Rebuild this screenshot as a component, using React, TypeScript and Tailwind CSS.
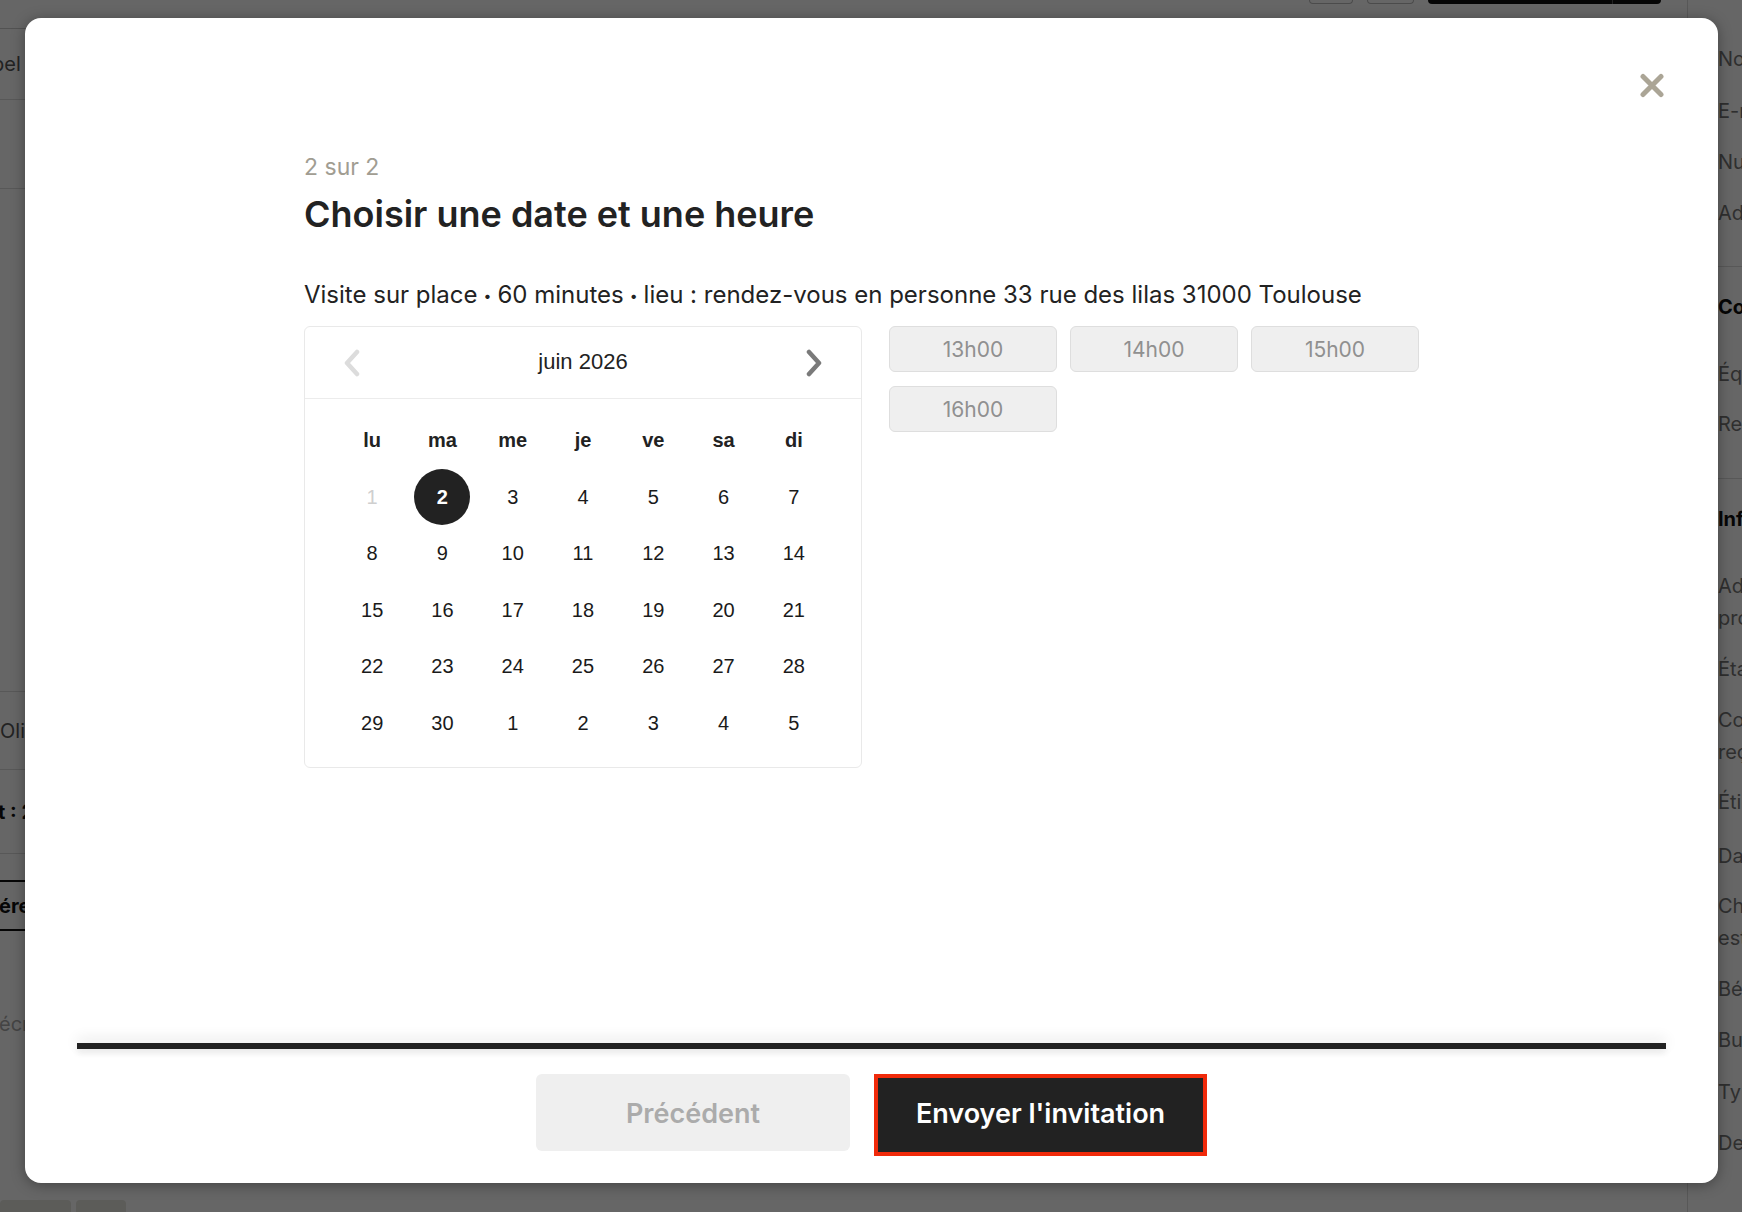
import React from "react";

const weekdays = ["lu", "ma", "me", "je", "ve", "sa", "di"];

const weeks: { day: number; muted?: boolean; selected?: boolean }[][] = [
  [{ day: 1, muted: true }, { day: 2, selected: true }, { day: 3 }, { day: 4 }, { day: 5 }, { day: 6 }, { day: 7 }],
  [8, 9, 10, 11, 12, 13, 14].map((day) => ({ day })),
  [15, 16, 17, 18, 19, 20, 21].map((day) => ({ day })),
  [22, 23, 24, 25, 26, 27, 28].map((day) => ({ day })),
  [29, 30, 1, 2, 3, 4, 5].map((day) => ({ day })),
];

const slots = ["13h00", "14h00", "15h00", "16h00"];

// side panel of the record page behind the dialog
const rightLabels: { text: string; second?: string; bold?: boolean; mt: string; ruleBefore?: string }[] = [
  { text: "Nom", mt: "mt-0" },
  { text: "E-mail", mt: "mt-[20px]" },
  { text: "Numéro", mt: "mt-[19px]" },
  { text: "Adresse", mt: "mt-[19px]" },
  { text: "Coordonnées", bold: true, mt: "mt-[24px]", ruleBefore: "mt-[37px]" },
  { text: "Équipe", mt: "mt-[35px]" },
  { text: "Responsable", mt: "mt-[18px]" },
  { text: "Informations", bold: true, mt: "mt-[24px]", ruleBefore: "mt-[38px]" },
  { text: "Adresse du", second: "projet", mt: "mt-[35px]" },
  { text: "État", mt: "mt-[19px]" },
  { text: "Contact", second: "reçu", mt: "mt-[19px]" },
  { text: "Étiquettes", mt: "mt-[18px]" },
  { text: "Date", mt: "mt-[22px]" },
  { text: "Chantier", second: "estimé", mt: "mt-[18px]" },
  { text: "Bénéficiaire", mt: "mt-[19px]" },
  { text: "Budget", mt: "mt-[19px]" },
  { text: "Type", mt: "mt-[20px]" },
  { text: "Description", mt: "mt-[19px]" },
];

function Chevron({ dir, className }: { dir: "left" | "right"; className: string }) {
  return (
    <svg width="18" height="28" viewBox="0 0 18 28" className={className}>
      <polyline
        points={dir === "left" ? "14,3 4,14 14,25" : "4,3 14,14 4,25"}
        fill="none"
        stroke="currentColor"
        strokeWidth="4.5"
        strokeLinecap="round"
        strokeLinejoin="round"
      />
    </svg>
  );
}

function Calendar() {
  return (
    <div className="w-[558px] rounded-[6px] border border-[#e9e9e9] bg-white font-['Liberation_Sans',Arial,sans-serif]">
      <div className="flex h-[72px] items-center justify-between border-b border-[#ececec] px-[38px]">
        <Chevron dir="left" className="text-[#dcdcdc]" />
        <span className="-mt-[3px] text-[22px] text-[#222]">juin 2026</span>
        <Chevron dir="right" className="text-[#7a7a7a]" />
      </div>
      <div className="px-[32px] pb-[16px] pt-[13px]">
        <div className="grid h-[56.5px] grid-cols-7 items-center text-center text-[20px] font-bold text-[#222]">
          {weekdays.map((d) => (
            <span key={d}>{d}</span>
          ))}
        </div>
        {weeks.map((week, i) => (
          <div key={i} className="grid h-[56.5px] grid-cols-7 items-center text-center text-[20px]">
            {week.map((c, j) => (
              <div key={j} className="flex items-center justify-center">
                {c.selected ? (
                  <span className="flex h-[56px] w-[56px] items-center justify-center rounded-full bg-[#222] font-bold text-white">
                    {c.day}
                  </span>
                ) : (
                  <span className={c.muted ? "text-[#cfcfcf]" : "text-[#1a1a1a]"}>{c.day}</span>
                )}
              </div>
            ))}
          </div>
        ))}
      </div>
    </div>
  );
}

function BackgroundPage() {
  return (
    <div className="flex h-full w-full bg-white font-['Inter',sans-serif] text-[20px]">
      {/* left record column */}
      <div className="flex w-[420px] shrink-0 flex-col text-[#555]">
        <div className="h-[29px] shrink-0 border-b border-[#ccc]" />
        <div className="flex h-[71px] shrink-0 items-center border-b border-[#ddd]">
          <span className="-ml-[34px]">Appel</span>
        </div>
        <div className="h-[89px] shrink-0 border-b border-[#ddd]" />
        <div className="h-[503px] shrink-0 border-b border-[#ddd]" />
        <div className="flex h-[78px] shrink-0 items-center border-b border-[#ddd]">Olivier Martin</div>
        <div className="flex h-[84px] shrink-0 items-center border-b border-[#ddd] font-bold text-[#111]">
          <span className="-ml-[2px]">t : 2</span>
        </div>
        <div className="h-[26px] shrink-0" />
        <div className="flex h-[51px] shrink-0 items-center border-y-2 border-[#111] font-bold text-[#111]">
          <span className="-ml-[1px]">érer</span>
        </div>
        <div className="flex h-[186px] shrink-0 items-center text-[#aaa]">
          <span className="-ml-[1px]">écrire</span>
        </div>
        <div className="mt-[83px] flex shrink-0 gap-[5px]">
          <div className="h-[12px] w-[71px] rounded-t-[4px] bg-[#e6e6de]" />
          <div className="h-[12px] w-[50px] rounded-t-[4px] bg-[#e6e6de]" />
        </div>
      </div>

      <div className="flex flex-1 justify-end">
        <div className="flex h-[4px] gap-[14px] pr-[26px]">
          <div className="h-[4px] w-[44px] rounded-b-[6px] border border-t-0 border-[#bbb]" />
          <div className="h-[4px] w-[47px] rounded-b-[6px] border border-t-0 border-[#bbb]" />
          <div className="flex h-[4px] w-[233px] rounded-b-[6px] bg-[#111]">
            <div className="w-[185px] border-r border-[#555]" />
          </div>
        </div>
      </div>

      {/* right detail panel */}
      <div className="flex w-[55px] shrink-0 flex-col border-l border-[#ddd] pl-[30px] pt-[43px] leading-[32px] text-[#777]">
        {rightLabels.map((l) => (
          <React.Fragment key={l.text}>
            {l.ruleBefore && <div className={`${l.ruleBefore} -ml-[30px] h-px w-[85px] shrink-0 bg-[#ddd]`} />}
            <div className={`${l.mt} shrink-0 whitespace-nowrap ${l.bold ? "font-bold text-[#111]" : ""}`}>
              <div>{l.text}</div>
              {l.second && <div>{l.second}</div>}
            </div>
          </React.Fragment>
        ))}
      </div>
    </div>
  );
}

function Dot() {
  return <span className="mx-[6px] inline-block align-middle text-[14px] leading-none">•</span>;
}

export default function App() {
  return (
    <div className="relative h-[1212px] w-[1742px] overflow-hidden">
      <BackgroundPage />

      <div className="absolute inset-0 bg-[rgba(0,0,0,0.6)] pl-[25px] pt-[18px]">
        <div className="relative flex h-[1165px] w-[1693px] flex-col rounded-[16px] bg-white font-['Inter',sans-serif] shadow-[0_2px_14px_rgba(0,0,0,0.35)]">
          <button className="absolute right-[54px] top-[55px] text-[#aba596]" aria-label="Fermer">
            <svg width="24" height="25" viewBox="0 0 24 25">
              <path d="M3 3.5 L21 21.5 M21 3.5 L3 21.5" stroke="currentColor" strokeWidth="5" strokeLinecap="round" />
            </svg>
          </button>

          <div className="flex-1 px-[279px] pt-[134px]">
            <div className="text-[23px] leading-[30px] text-[#a19d92]">2 sur 2</div>
            <h1 className="mt-[11px] text-[36px] font-semibold leading-[42px] text-[#222]">
              Choisir une date et une heure
            </h1>
            <p className="mt-[44px] text-[24px] leading-[32px] text-[#222]">
              Visite sur place
              <Dot />
              60 minutes
              <Dot />
              lieu : rendez-vous en personne 33 rue des lilas 31000 Toulouse
            </p>

            <div className="mt-[15px] flex items-start gap-[27px]">
              <Calendar />
              <div className="flex w-[530px] flex-wrap gap-x-[13px] gap-y-[14px]">
                {slots.map((s) => (
                  <button
                    key={s}
                    className="flex h-[46px] w-[168px] items-center justify-center rounded-[6px] border border-[#dedede] bg-[#efefef] pt-[2px] text-[21px] text-[#909090]"
                  >
                    {s}
                  </button>
                ))}
              </div>
            </div>
          </div>

          <div className="flex h-[140px] flex-col">
            <div className="mx-[52px] h-[6px] bg-[#222] shadow-[0_-4px_14px_rgba(0,0,0,0.12),0_4px_6px_rgba(0,0,0,0.08)]" />
            <div className="flex items-start justify-center gap-[24px] pt-[25px]">
              <button className="flex h-[77px] w-[314px] items-center justify-center rounded-[6px] bg-[#efefef] pt-[3px] text-[27px] font-semibold text-[#ababab]">
                Précédent
              </button>
              <button className="flex h-[82px] w-[333px] items-center justify-center border-[4px] border-[#f02a0a] bg-[#222] pb-[1px] text-[27px] font-semibold text-white">
                Envoyer l'invitation
              </button>
            </div>
          </div>
        </div>
      </div>
    </div>
  );
}
